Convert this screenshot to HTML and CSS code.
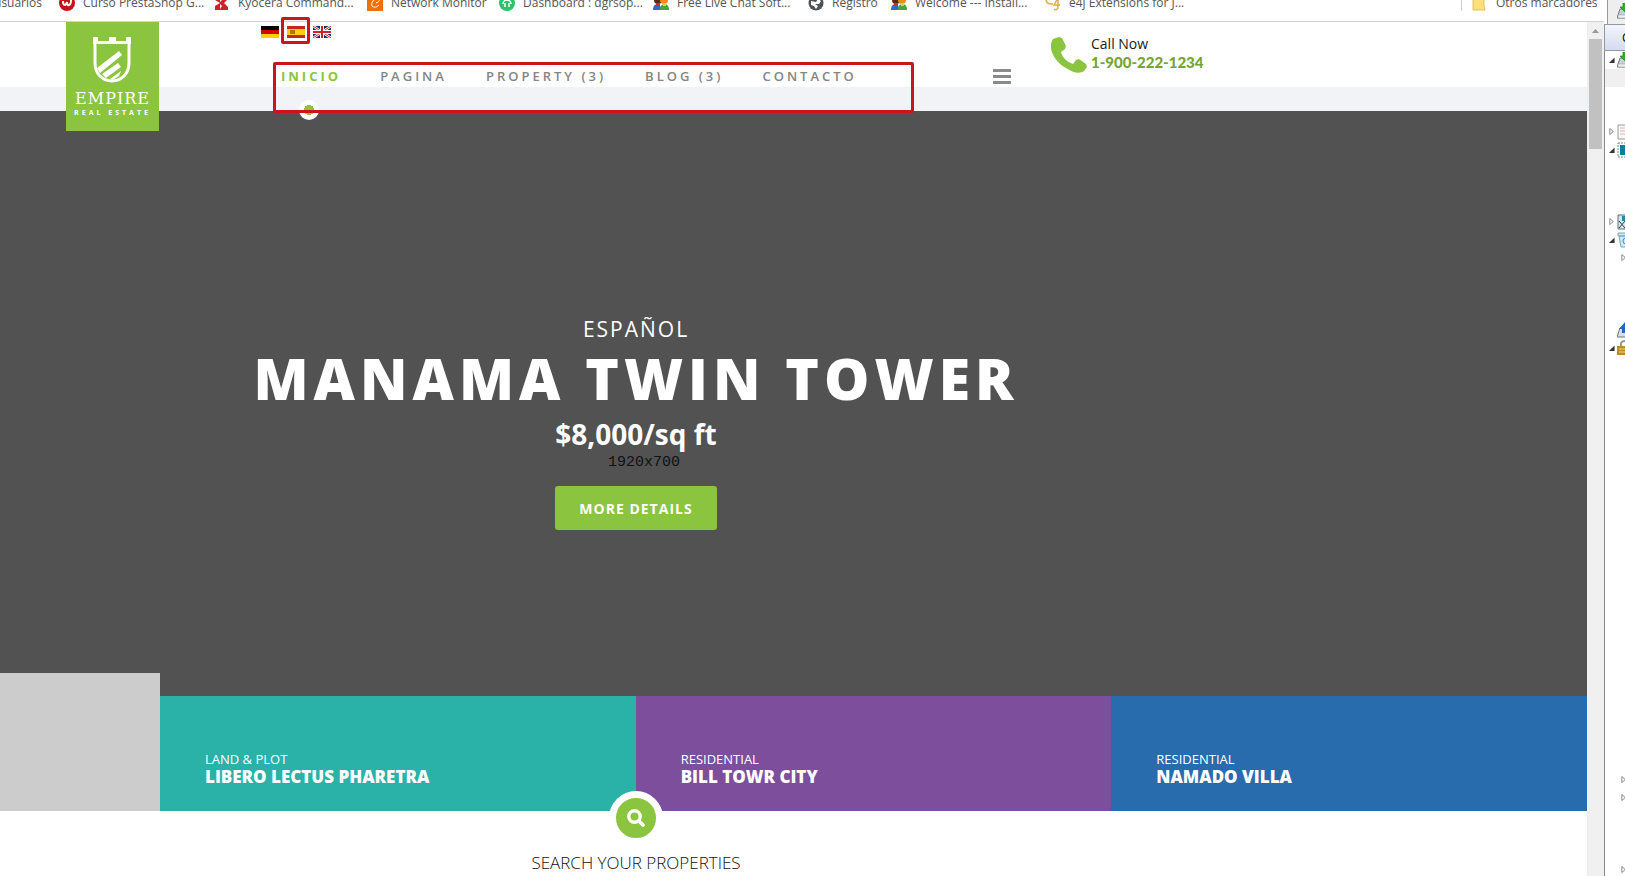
FILE: index.html
```html
<!DOCTYPE html>
<html lang="es">

<head>
    <meta charset="UTF-8">
    <title>Empire Real Estate</title>
    <link rel="stylesheet" href="styles.css">
</head>

<body>
<svg class="sprite" width="0" height="0" aria-hidden="true">
  <symbol id="people" viewBox="0 0 16 16"><circle cx="5" cy="5" r="4" fill="#5a2a10"/><circle cx="11" cy="5" r="4" fill="#f08a1d"/><path d="M0 15c0-4 2-6 4.500-6S8 11 8 15z" fill="#3468c8"/><path d="M7 15c0-4 2-6 4.500-6S16 11 16 15z" fill="#49a43c"/><path d="M3 8h4v3H3z" fill="#d62c1e"/><path d="M10 8h3v3h-3z" fill="#f6c843"/></symbol>
  <symbol id="closed" viewBox="0 0 7 10"><path d="M1 1v7l4-3.500z" fill="#fff" stroke="#777"/></symbol>
  <symbol id="open" viewBox="0 0 7 7"><path d="M6.500 0v6.500H0z" fill="#333"/></symbol>
  <symbol id="inbox" viewBox="0 0 16 16"><path d="M3 6L0 15h16V6z" fill="#c6d0d8" stroke="#707a82"/><path d="M1 12h15v3H1z" fill="#edf1f4" stroke="#8c969d" stroke-width=".5"/><path d="M6 0h5v4h4l-6 6-6-6h3z" fill="#32ad2a" stroke="#1d7d19" stroke-width=".7"/></symbol>
</svg>

<div class="browser">
  <div class="bookmarks">
    <a href="#" class="first">usuarios</a>
    <a href="#"><svg viewBox="0 0 16 16"><circle cx="8" cy="8" r="8" fill="#c4141b"/><path d="M4 6c0 5 3 5 4 1 0 5 4 4 4-2" fill="none" stroke="#fff" stroke-width="2"/></svg>Curso PrestaShop G...</a>
    <a href="#"><svg viewBox="0 0 16 16"><path d="M1 1h13v14H1z" fill="#d3202a"/><path d="M1 5l5 3-5 3zM14 4l-4 4 4 4zM6 2l2 3-2 2zM6 14l2-3-2-2z" fill="#fff"/></svg>Kyocera Command...</a>
    <a href="#"><svg viewBox="0 0 16 16"><path d="M0 0h16v16H0z" fill="#ef7009"/><path d="M12 4C6 3 4 8 5 11c2 2 5 1 7-1M9 8c3-1 4-3 3-4" fill="none" stroke="#fff"/></svg>Network Monitor</a>
    <a href="#"><svg viewBox="0 0 16 16"><circle cx="8" cy="8" r="8" fill="#2cc36b"/><path d="M4 9a4 4 0 0 1 8 0M6 8v4M10 8v4" fill="none" stroke="#fff" stroke-width="1.500"/></svg>Dashboard : dgrsop...</a>
    <a href="#"><svg><use href="#people"/></svg>Free Live Chat Soft...</a>
    <a href="#"><svg viewBox="0 0 16 16"><circle cx="8" cy="8" r="7.500" fill="#505459"/><path d="M3 6l5 1 2-3 3 2-2 3-4 0 3 2-2 3-2-3-3-1z" fill="#fff"/></svg>Registro</a>
    <a href="#"><svg><use href="#people"/></svg>Welcome --- Install...</a>
    <a href="#"><svg viewBox="0 0 16 16"><path d="M1 5c1 5 5 4 7 4M13 3L9 10h6M13 3v9c0 3-3 3-4 2" fill="none" stroke="#d9b13b" stroke-width="1.500"/></svg>e4j Extensions for J...</a>
    <a href="#" class="others"><svg viewBox="0 0 16 16"><path d="M1 1h11v10l1 4H1z" fill="#fbe07a" stroke="#e5c14e"/></svg>Otros marcadores</a>
  </div>

  <div class="view">
    <div class="page">
      <header class="header">
        <div class="container">
          <a href="#" class="logo">
            <svg viewBox="0 0 40 46"><path d="M2 1v25c0 12 9 18 17 18s17-6 17-18V1" fill="none" stroke="#fff" stroke-width="3"/><path d="M0 0h5v4h11V0h7v4h10V0h5v7H0zM4 31L26 14l3 4L7 36zM9 37L25 26l3 4-15 11zM17 42l11-8-2 5-6 4z" fill="#fff"/></svg>
            <span class="logoName">EMPIRE</span>
            <span class="logoSub">REAL ESTATE</span>
          </a>

          <div class="menu">
            <div class="flags">
              <a href="#" aria-label="Deutsch"><svg viewBox="0 0 18 12"><path d="M0 0h18v4H0z"/><path d="M0 4h18v4H0z" fill="#d80000"/><path d="M0 8h18v4H0z" fill="#ffce00"/></svg></a>
              <a href="#" class="current" aria-label="Español"><svg viewBox="0 0 18 12"><path d="M0 0h18v12H0z" fill="#c8261c"/><path d="M0 3h18v6H0z" fill="#fc0"/><path d="M3 4h5v4H3z" fill="#b87316"/></svg></a>
              <a href="#" aria-label="English"><svg viewBox="0 0 18 12"><path d="M0 0h18v12H0z" fill="#1e2a70"/><path d="M0 0l18 12M18 0L0 12" stroke="#fff" stroke-width="2.500"/><path d="M0 0l18 12M18 0L0 12" stroke="#d0202c"/><path d="M9 0v12M0 6h18" stroke="#fff" stroke-width="4"/><path d="M9 0v12M0 6h18" stroke="#d0202c" stroke-width="2"/></svg></a>
            </div>
            <nav class="nav">
              <a href="#" class="active">INICIO</a>
              <a href="#">PAGINA</a>
              <a href="#">PROPERTY (3)</a>
              <a href="#">BLOG (3)</a>
              <a href="#">CONTACTO</a>
            </nav>
          </div>

          <button class="toggle" aria-label="Menu"><i></i><i></i><i></i></button>

          <div class="call">
            <svg viewBox="0 0 36 36"><path d="M2 2L8 0l3 1 4 8-1 3-4 3c1 5 6 10 12 12l3-4 3-1 7 5 1 3-3 4c-4 3-11 2-18-3C4 25-3 12 1 4z" fill="#8bc540"/></svg>
            <div>
              <span>Call Now</span>
              <b>1-900-222-1234</b>
            </div>
          </div>
        </div>
      </header>

      <section class="hero">
        <div class="slide">
          <p class="lang">ESPAÑOL</p>
          <h1>MANAMA TWIN TOWER</h1>
          <p class="price">$8,000/sq ft</p>
          <span class="size">1920x700</span>
          <button class="more">MORE DETAILS</button>
        </div>
      </section>

      <section class="tiles">
        <div class="blank"></div>
        <a href="#" class="tile teal"><span>LAND &amp; PLOT</span><b>LIBERO LECTUS PHARETRA</b></a>
        <a href="#" class="tile purple"><span>RESIDENTIAL</span><b>BILL TOWR CITY</b></a>
        <a href="#" class="tile blue"><span>RESIDENTIAL</span><b>NAMADO VILLA</b></a>
      </section>

      <section class="search">
        <button class="searchBtn" aria-label="Search"><svg viewBox="0 0 18 18"><circle cx="7.500" cy="7.500" r="5.700" fill="none" stroke="#fff" stroke-width="3.400"/><path d="M12 12l4 4" stroke="#fff" stroke-width="3.600" stroke-linecap="round"/></svg></button>
        <h2>SEARCH YOUR PROPERTIES</h2>
      </section>
    </div>

    <div class="scrollbar">
      <svg viewBox="0 0 13 17"><path d="M3 11h7L6.500 7z" fill="#999"/></svg>
      <div class="thumb"></div>
    </div>
  </div>
</div>

<aside class="side">
  <div class="toolbar"><svg viewBox="0 0 16 16"><use href="#inbox"/></svg></div>
  <div class="sideTitle">C</div>
  <ul class="tree">
    <li><svg class="open"><use href="#open"/></svg><svg class="icon"><use href="#inbox"/></svg></li>
    <li class="selected"></li>
    <li class="skip2"><svg class="closed"><use href="#closed"/></svg><svg class="icon" viewBox="0 0 16 16"><path d="M1 1h15v14H1z" fill="#faf7f5" stroke="#999"/><path d="M3 4h12M3 7h12M3 10h12" stroke="#d2b9b9"/></svg></li>
    <li><svg class="open"><use href="#open"/></svg><svg class="icon" viewBox="0 0 16 16"><path d="M1 1h15v14H1z" fill="#fff" stroke="#6b8794" stroke-dasharray="2 1"/><path d="M3 3h13v10H3z" fill="#137b9d"/></svg></li>
    <li class="skip3"><svg class="closed"><use href="#closed"/></svg><svg class="icon" viewBox="0 0 16 16"><path d="M1 1h15v14H1z" fill="#d8e4ea" stroke="#57717e"/><path d="M5 2h11v5H5z" fill="#2789a5"/><path d="M2 7l6 7M8 7l-6 7M9 9h7v5H9z" fill="none" stroke="#34434b"/></svg></li>
    <li><svg class="open"><use href="#open"/></svg><svg class="icon" viewBox="0 0 16 16"><path d="M1 1h15v3H1zM2 4h14v11H4z" fill="#cbe9f7" stroke="#7fa6b8"/><circle cx="9" cy="9" r="3" fill="none" stroke="#3592ca"/></svg></li>
    <li class="child"><svg class="closed"><use href="#closed"/></svg></li>
    <li class="skip3 alone"><svg class="icon" viewBox="0 0 16 16"><path d="M3 6L0 15h16V6z" fill="#d6dee5" stroke="#707a82"/><path d="M8 0L2 7h3v4h9V0z" fill="#2567c9"/></svg></li>
    <li><svg class="open"><use href="#open"/></svg><svg class="icon" viewBox="0 0 16 16"><path d="M4 7V4c0-4 8-4 8 0v3" fill="none" stroke="#999" stroke-width="2"/><path d="M0 6h16v9H0z" fill="#b98c28"/><path d="M2 9h14M2 12h14" stroke="#f0d98c"/></svg></li>
    <li class="child skip23"><svg class="closed"><use href="#closed"/></svg></li>
    <li class="child"><svg class="closed"><use href="#closed"/></svg></li>
    <li class="child skip3"><svg class="closed"><use href="#closed"/></svg></li>
  </ul>
</aside>
</body>
</html>
```

FILE: styles.css
```css
* {
    box-sizing: border-box;
}

body {
    margin: 0;
    height: 100vh;
    display: flex;
    overflow: hidden;
    background: #fff;
    color: #222;
    font-family: "Open Sans", "Noto Sans", sans-serif;
}

a {
    color: inherit;
    text-decoration: none;
}

button {
    border: none;
    padding: 0;
    cursor: pointer;
    font-family: inherit;
}

svg {
    display: block;
    flex: none;
}

p,
h1,
h2,
ul {
    margin: 0;
    padding: 0;
}

.sprite {
    position: absolute;
}

.browser {
    flex: 1;
    min-width: 0;
    display: flex;
    flex-direction: column;
}

/* bookmarks */
.bookmarks {
    flex: none;
    height: 22px;
    padding-bottom: 10px;
    display: grid;
    grid-template-columns: 59px 155px 153px 132px 154px 155px 83px 154px 1fr 143px;
    align-content: end;
    border-bottom: 1px solid #d2d2d2;
    overflow: hidden;
    font-size: 12px;
    line-height: 16px;
    white-space: nowrap;
    color: #555;
}

.bookmarks a {
    display: flex;
    gap: 8px;
}

.bookmarks .first {
    width: 42px;
    justify-content: flex-end;
}

.bookmarks svg {
    width: 16px;
    height: 16px;
}

.bookmarks .others {
    padding-left: 10px;
    border-left: 1px solid #ccc;
}

.view {
    flex: 1;
    min-height: 0;
    display: flex;
}

.page {
    flex: 1;
    min-width: 0;
}

/* header */
.header {
    height: 89px;
    background: linear-gradient(#fff 65px, #f1f3f7 65px);
    position: relative;
    z-index: 2;
}

.container {
    max-width: 1206px;
    padding-left: 66px;
    display: flex;
    align-items: flex-start;
}

.logo {
    width: 93px;
    height: 109px;
    padding-top: 15px;
    background: #8bc540;
    color: #fff;
    display: flex;
    flex-direction: column;
    align-items: center;
}

.logo svg {
    width: 40px;
    height: 46px;
}

.logoName {
    margin-top: 6px;
    font-family: "DejaVu Serif", serif;
    font-size: 16px;
    line-height: 20px;
    letter-spacing: 1px;
}

.logoSub {
    font-size: 7px;
    line-height: 8px;
    font-weight: bold;
    letter-spacing: 3px;
    white-space: nowrap;
}

.menu {
    flex: 1;
    margin-left: 102px;
    padding-top: 4px;
}

.flags {
    display: flex;
    gap: 8px;
}

.flags a {
    position: relative;
}

.flags svg {
    width: 18px;
    height: 12px;
}

.flags .current::after {
    content: "";
    position: absolute;
    inset: -9px -5px -6px -6px;
    border: 3px solid #c9151b;
    border-radius: 2px;
}

.nav {
    position: relative;
    width: 641px;
    height: 51px;
    margin: 24px 0 0 12px;
    padding: 4px 8px;
    display: flex;
    gap: 39px;
    font-size: 13px;
    line-height: 20px;
    font-weight: 600;
    letter-spacing: 3px;
    white-space: nowrap;
    color: #858585;
}

.nav::after {
    content: "";
    position: absolute;
    inset: 0;
    border: 3px solid #c9151b;
    border-radius: 2px;
    pointer-events: none;
}

.nav a {
    position: relative;
}

.nav .active {
    color: #8bc540;
    font-weight: bold;
}

.nav .active::after {
    content: "";
    position: absolute;
    left: 50%;
    top: 34px;
    width: 20px;
    height: 20px;
    margin-left: -12px;
    border-radius: 50%;
    background: radial-gradient(circle at 50% 50%, #8bc540 5px, #fff 5px);
}

.toggle {
    width: 18px;
    margin: 47px 40px 0 0;
    background: none;
    display: grid;
    gap: 3px;
}

.toggle i {
    height: 3px;
    background: #8a8a8a;
}

.call {
    width: 155px;
    padding-top: 13px;
    display: flex;
    gap: 4px;
    white-space: nowrap;
}

.call > svg {
    width: 36px;
    height: 36px;
    margin-top: 2px;
}

.call span,
.call b {
    display: block;
    font-size: 14px;
    line-height: 18px;
}

.call b {
    color: #74a534;
    font-family: Lato, sans-serif;
    font-size: 15px;
    font-weight: 900;
}

/* slider */
.hero {
    height: 585px;
    background: #525252;
    color: #fff;
}

.slide {
    max-width: 1272px;
    padding-top: 203px;
    display: flex;
    flex-direction: column;
    align-items: center;
    text-align: center;
    white-space: nowrap;
}

.lang {
    font-size: 21px;
    line-height: 30px;
    letter-spacing: 2px;
}

h1 {
    font-size: 57px;
    line-height: 68px;
    font-weight: 800;
    letter-spacing: 5px;
}

.price {
    font-size: 28px;
    line-height: 44px;
    font-weight: bold;
}

.size {
    margin-left: 16px;
    color: #111;
    font-family: "Liberation Mono", monospace;
    font-size: 15px;
    line-height: 14px;
}

.more {
    height: 44px;
    margin-top: 16px;
    padding: 0 24px;
    border-radius: 3px;
    background: #8bc540;
    color: #fff;
    font-size: 14px;
    font-weight: bold;
    letter-spacing: 1px;
}

/* property tiles */
.tiles {
    position: relative;
    display: grid;
    grid-template-columns: 160px 1fr 1fr 1fr;
    height: 115px;
}

.blank {
    margin-top: -23px;
    background: #ccc;
}

.tile {
    padding: 54px 45px 0;
    color: #fff;
}

.tile span,
.tile b {
    display: block;
    font-size: 13px;
    line-height: 18px;
}

.tile b {
    font-size: 17px;
    font-weight: 800;
}

.teal {
    background: #2ab1a8;
}

.purple {
    background: #7c4e9b;
}

.blue {
    background: #296cad;
}

/* search */
.search {
    position: relative;
    max-width: 1272px;
    margin-top: -20px;
    display: flex;
    flex-direction: column;
    align-items: center;
}

.searchBtn {
    width: 54px;
    height: 54px;
    border: 7px solid #fff;
    border-radius: 50%;
    background: #8bc540;
    display: grid;
    place-items: center;
}

.searchBtn svg {
    width: 18px;
    height: 18px;
}

h2 {
    margin-top: 6px;
    font-size: 17px;
    line-height: 24px;
    font-weight: 300;
    color: #111;
}

/* scrollbar */
.scrollbar {
    width: 17px;
    padding: 0 2px;
    background: #f0f0f0;
}

.scrollbar svg {
    width: 13px;
    height: 17px;
}

.thumb {
    height: 110px;
    background: #c1c1c1;
}

/* mail folders */
.side {
    width: 21px;
    flex: none;
    overflow: hidden;
}

.toolbar {
    height: 24px;
    margin-left: 3px;
    padding: 3px 0 0 9px;
    border-left: 1px solid #999;
    background: #eee;
}

.toolbar svg {
    width: 16px;
    height: 16px;
}

.sideTitle {
    height: 27px;
    padding-left: 17px;
    border: 1px solid #999;
    border-right: none;
    background: linear-gradient(#f3f5fd, #d4daf0);
    font-size: 12px;
    line-height: 25px;
    color: #000;
}

.tree {
    height: 100%;
    border-left: 1px solid #888;
    list-style: none;
}

.tree li {
    height: 18px;
    padding-left: 4px;
    display: flex;
    align-items: center;
    gap: 2px;
}

.tree .selected {
    background: #f0f0f0;
}

.tree .child {
    padding-left: 16px;
}

.tree .alone {
    padding-left: 12px;
}

.tree .skip2 {
    margin-top: 36px;
}

.tree .skip3 {
    margin-top: 54px;
}

.tree .skip23 {
    margin-top: 414px;
}

.open {
    width: 6px;
    height: 7px;
}

.closed {
    width: 6px;
    height: 10px;
}

.icon {
    width: 16px;
    height: 16px;
}
```
